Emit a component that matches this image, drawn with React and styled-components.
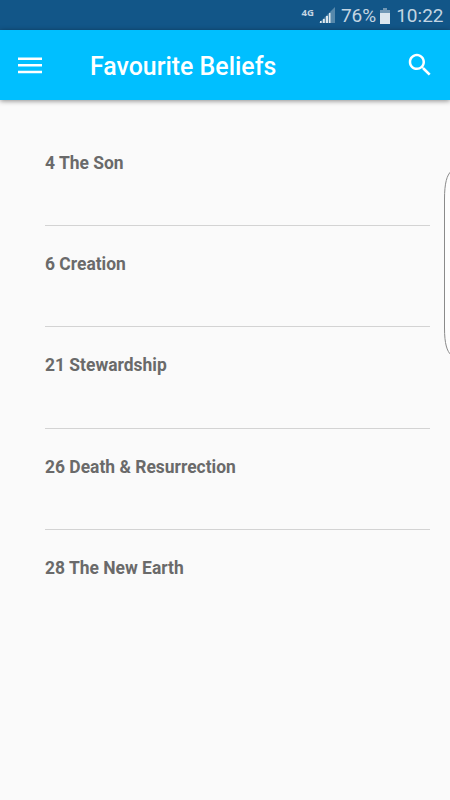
import React from "react";
import styled, { createGlobalStyle } from "styled-components";

const GlobalStyle = createGlobalStyle`
  body { margin: 0; background: #fafafa; font-family: Roboto, sans-serif; }
`;

const Screen = styled.div`
  position: relative;
  display: flex;
  flex-direction: column;
  width: 450px;
  height: 800px;
  overflow: hidden;
  background: #fafafa;
`;

const StatusBar = styled.div`
  display: flex;
  height: 30px;
  flex: none;
  align-items: center;
  justify-content: flex-end;
  box-sizing: border-box;
  padding: 2px 6.5px 0 0;
  background: #125688;
  color: #c3d5e2;
`;

const Network = styled.span`
  font: 700 9.6px/10px "Open Sans", sans-serif;
  margin: 0 5px 7px 0;
`;

const StatusText = styled.span`
  font-size: 19px;
  line-height: 28px;
`;

const SignalIcon = styled.svg`
  width: 16px;
  height: 16px;
  margin: 0 6px 2px 0;
`;

const BatteryIcon = styled.svg`
  width: 10px;
  height: 16px;
  margin: 0 6px 1px 4px;
`;

const AppBar = styled.header`
  display: flex;
  height: 70px;
  flex: none;
  align-items: center;
  box-sizing: border-box;
  padding: 0 15px 0 18px;
  background: #00bfff;
  color: #fff;
  box-shadow: 0 1px 5px rgba(0, 0, 0, 0.45);
`;

const IconButton = styled.button`
  display: flex;
  padding: 0;
  border: 0;
  background: none;
  color: inherit;
`;

const Title = styled.h1`
  flex: 1;
  margin: 4px 0 0 48px;
  font-size: 24.9px;
  line-height: 32px;
  font-weight: 500;
  white-space: nowrap;
`;

const List = styled.ul`
  margin: 0;
  padding: 25px 20px 0 45px;
  list-style: none;
`;

const Row = styled.li`
  height: 101.2px;
  box-sizing: border-box;
  padding-top: 26px;
  border-bottom: 1px solid #d3d3d3;
  color: #6a6a6a;
  font-size: 17.45px;
  line-height: 24px;
  font-weight: 700;
  &:last-child { border-bottom: 0; }
`;

const EdgeHandle = styled.svg`
  position: absolute;
  right: 0;
  top: 170px;
  width: 8px;
  height: 187px;
`;

const beliefs = ["4 The Son", "6 Creation", "21 Stewardship", "26 Death & Resurrection", "28 The New Earth"];

export default function App() {
  return (
    <Screen>
      <GlobalStyle />
      <StatusBar>
        <Network>4G</Network>
        <SignalIcon viewBox="0 0 16 16">
          <path d="M0 16 16 0v16z" fill="#5688ab" />
          <path d="M1 14h1.6v2H1zM4 12h1.8v4H4zM7 9h2v7H7zM10 6h1.5v10H10z" fill="#dce8ef" />
        </SignalIcon>
        <StatusText>76%</StatusText>
        <BatteryIcon viewBox="0 0 10 16">
          <path d="M3 0h4v2h3v4H0V2h3z" fill="#7198b5" />
          <path d="M0 5h10v11H0z" fill="#dbe6ee" />
        </BatteryIcon>
        <StatusText>10:22</StatusText>
      </StatusBar>
      <AppBar>
        <IconButton aria-label="Menu">
          <svg width="24" height="17" viewBox="0 0 24 17" fill="currentColor">
            <path d="M0 .5h24V3H0zM0 7h24v2.5H0zM0 13.7h24v2.6H0z" />
          </svg>
        </IconButton>
        <Title>Favourite Beliefs</Title>
        <IconButton aria-label="Search">
          <svg width="30" height="30" viewBox="0 0 24 24" fill="currentColor">
            <path d="M15.5 14h-.79l-.28-.27C15.41 12.59 16 11.11 16 9.5 16 5.91 13.09 3 9.5 3S3 5.91 3 9.5 5.91 16 9.5 16c1.61 0 3.09-.59 4.23-1.57l.27.28v.79l5 4.99L20.49 19l-4.99-5zm-6 0C7.01 14 5 11.99 5 9.5S7.01 5 9.5 5 14 7.01 14 9.5 11.99 14 9.5 14z" />
          </svg>
        </IconButton>
      </AppBar>
      <List>
        {beliefs.map((b) => (
          <Row key={b}>{b}</Row>
        ))}
      </List>
      <EdgeHandle viewBox="0 0 8 187">
        <path d="M9 1.5C5 5 2.5 13 2.5 29v129c0 16 2.5 23 6.5 27" fill="#fdfdfd" stroke="#8a8a8a" />
      </EdgeHandle>
    </Screen>
  );
}
